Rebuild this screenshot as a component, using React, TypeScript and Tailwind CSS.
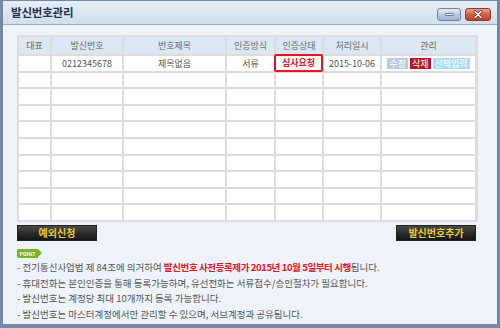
import React from "react";

const font = { fontFamily: '"Noto Sans CJK KR", "Noto Sans", sans-serif' };

const cols = [31, 70, 101, 47, 46, 56, 93];
const headers = ["대표", "발신번호", "번호제목", "인증방식", "인증상태", "처리일시", "관리"];

function Cell({ children, className = "" }: { children?: React.ReactNode; className?: string }) {
  return (
    <div className={`flex items-center justify-center bg-white text-[9px] text-[#555] ${className}`}>
      {children}
    </div>
  );
}

export default function App() {
  const emptyRows = Array.from({ length: 9 });
  return (
    <div
      className="w-[500px] h-[328px] overflow-hidden border-x-[3px] border-b-[4px] border-t-[1px] border-[#7489a3] bg-[#eef3f9] flex flex-col"
      style={font}
    >
      {/* title bar */}
      <div className="h-[24px] shrink-0 flex items-center justify-between pl-[8px] pr-[6px] bg-gradient-to-b from-[#e6eef7] to-[#d2deeb] border-b border-[#98acc3]">
        <span className="text-[11.5px] font-bold text-[#1e3350] tracking-[-0.2px]">발신번호관리</span>
        <div className="flex items-center gap-[4px] mt-[4px]">
          <div className="w-[24px] h-[13px] rounded-[3px] border border-[#6e86a4] bg-gradient-to-b from-[#e4ecf6] via-[#bccbdd] to-[#9fb3cb] flex items-center justify-center">
            <div className="w-[9px] h-[3px] bg-white border border-[#6b7f99] rounded-[1px]" />
          </div>
          <div className="w-[26px] h-[13px] rounded-[3px] border border-[#8b3a2c] bg-gradient-to-b from-[#e8a595] via-[#d45f46] to-[#c1432b] flex items-center justify-center">
            <svg width="10" height="9" viewBox="0 0 10 9">
              <path d="M2 1.5 L8 7.5 M8 1.5 L2 7.5" stroke="#5a2a20" strokeWidth="3" strokeLinecap="round" />
              <path d="M2 1.5 L8 7.5 M8 1.5 L2 7.5" stroke="#fff" strokeWidth="1.6" strokeLinecap="round" />
            </svg>
          </div>
        </div>
      </div>

      {/* body */}
      <div className="flex-1 pl-[14px] pr-[19px] pt-[10px]">
        {/* table */}
        <div
          className="grid bg-[#dcdcdc] border-[2px] border-[#dcdcdc] gap-[2px] w-[461px]"
          style={{
            gridTemplateColumns: cols.map((c) => `${c}px`).join(" "),
            gridTemplateRows: `17px repeat(10, 14.6px)`,
          }}
        >
          {headers.map((h) => (
            <div key={h} className="flex items-center justify-center bg-[#dce7f3] text-[9px] text-[#6b6b6b]">
              {h}
            </div>
          ))}
          <Cell />
          <Cell>0212345678</Cell>
          <Cell>제목없음</Cell>
          <Cell>서류</Cell>
          <div className="relative bg-white">
            <div className="absolute -left-[2px] -top-[2px] -right-[1px] -bottom-[1px] border-[2px] border-[#e8141e] rounded-[2px] flex items-center justify-center text-[9px] font-bold text-[#e8141e]">
              심사요청
            </div>
          </div>
          <Cell>2015-10-06</Cell>
          <Cell className="gap-[2px]">
            <span className="bg-[#b9cbe0] text-white px-[2px] leading-[11px]">수정</span>
            <span className="bg-[#b3182a] text-white px-[2px] leading-[11px]">삭제</span>
            <span className="bg-[#a9ddf2] text-white px-[2px] leading-[11px]">선택입력</span>
          </Cell>
          {emptyRows.map((_, r) =>
            cols.map((_, c) => <Cell key={`${r}-${c}`} />)
          )}
        </div>

        {/* buttons */}
        <div className="flex justify-between w-[459px] mt-[3px]">
          <div className="w-[80px] h-[16px] flex items-center justify-center bg-gradient-to-b from-[#4a4a4a] to-[#141414] border border-[#222] text-[10px] font-bold text-[#e5cd33]">
            예외신청
          </div>
          <div className="w-[80px] h-[16px] flex items-center justify-center bg-gradient-to-b from-[#4a4a4a] to-[#141414] border border-[#222] text-[10px] font-bold text-[#e5cd33]">
            발신번호추가
          </div>
        </div>

        {/* point */}
        <div className="mt-[8px] flex items-center">
          <div className="h-[9px] w-[21px] bg-[#78b42a] rounded-l-[2px] flex items-center justify-center text-[5px] font-bold text-white leading-none">
            POINT
          </div>
          <div className="w-0 h-0 border-y-[4.5px] border-y-transparent border-l-[4px] border-l-[#78b42a]" />
        </div>

        <div className="mt-[2px] text-[9.5px] text-[#555] leading-[15.6px]">
          <div>
            - 전기통신사업법 제 84조에 의거하여{" "}
            <span className="font-bold text-[#e8141e] tracking-[-0.4px]">발신번호 사전등록제가 2015년 10월 5일부터 시행</span>됩니다.
          </div>
          <div>- 휴대전화는 본인인증을 통해 등록가능하며, 유선전화는 서류접수/승인절차가 필요합니다.</div>
          <div>- 발신번호는 계정당 최대 10개까지 등록 가능합니다.</div>
          <div>- 발신번호는 마스터계정에서만 관리할 수 있으며, 서브계정과 공유됩니다.</div>
        </div>
      </div>
    </div>
  );
}
